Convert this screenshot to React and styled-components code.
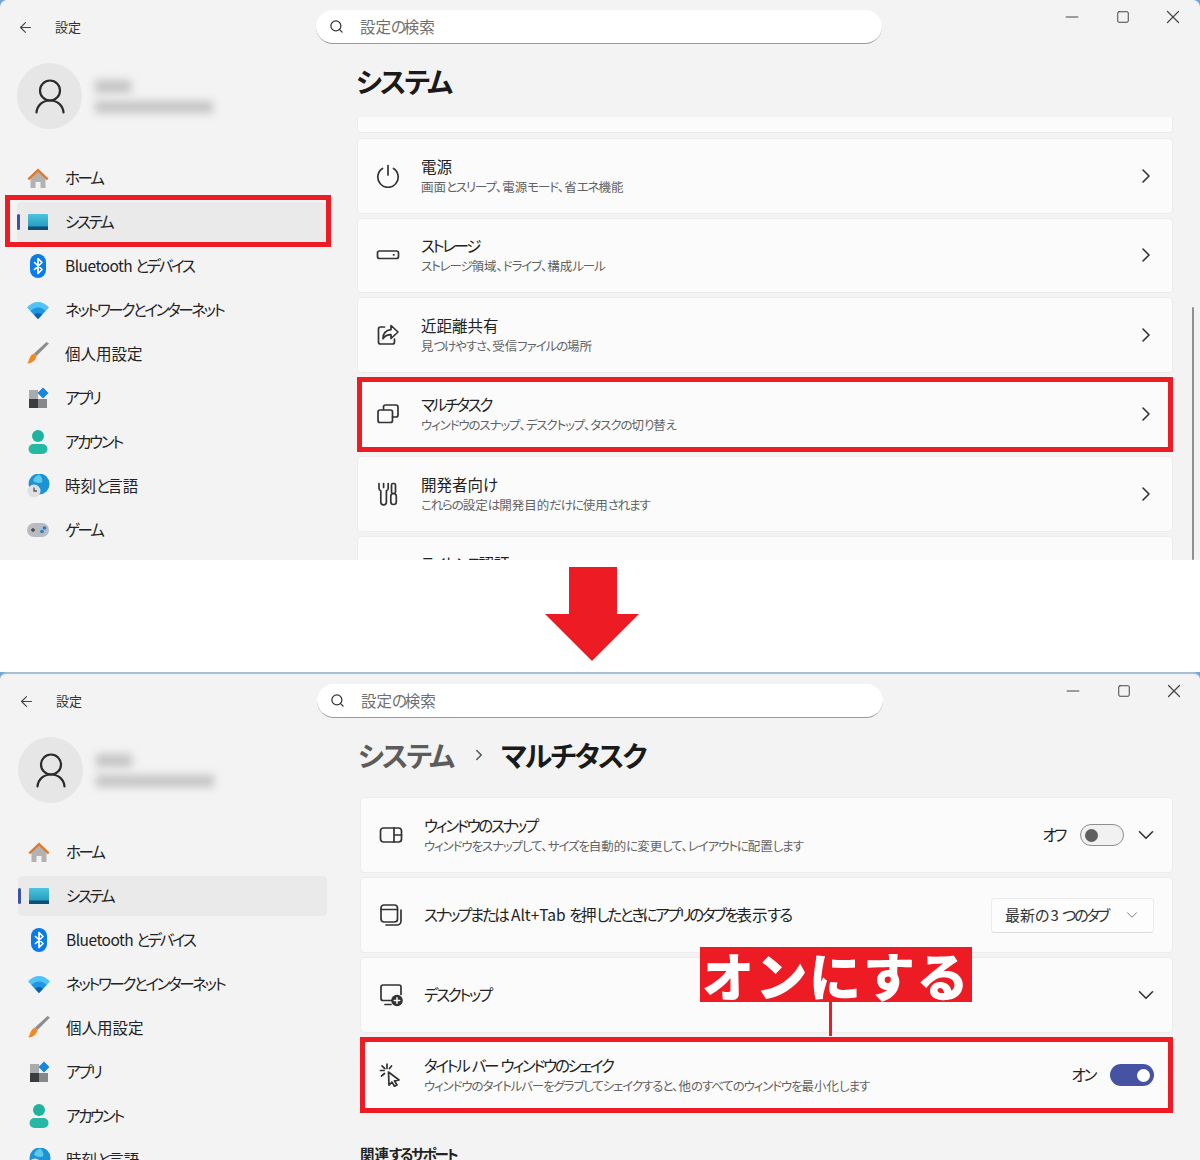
import React from 'react'
import styled, { createGlobalStyle } from 'styled-components'
import { ArrowLeft, ChevronDown, ChevronRight, Minus, Search, Square, X } from 'lucide-react'

const GlobalStyle = createGlobalStyle`
  html, body {
    margin: 0;
    background: #fff;
  }
  body {
    --kana: -0.15em;
    font-family: "Noto Sans CJK JP", "Noto Sans", sans-serif;
    font-feature-settings: "palt" 1;
    color: #1c1c1c;
  }
`

const RED = '#ed1c24'

// the window's UI font has narrower kana than Noto, so kana runs get tracked in
const Kana = styled.span`
  letter-spacing: var(--kana);
`

const T = ({ children }) =>
  children.split(/([\u3040-\u30ff]+)/).map((part, i) => (i % 2 ? <Kana key={i}>{part}</Kana> : part))

const Line = ({ children, size = 24 }) => (
  <svg width={size} height={size} viewBox='0 0 24 24' fill='none' stroke='#333' strokeWidth='1.7' strokeLinecap='round' strokeLinejoin='round'>
    {children}
  </svg>
)

const Color = ({ children }) => (
  <svg width='24' height='24' viewBox='0 0 24 24'>
    {children}
  </svg>
)

const HomeIcon = () => (
  <Color>
    <path d='M4.5 11.5 12 5l7.5 6.5V22h-5v-6h-5v6h-5z' fill='#b4b2b0' />
    <path d='M1.5 12.5 12 2.5l10.500 10-1.600 1.700L12 5.800 3.100 14.200z' fill='#e0782a' />
  </Color>
)

const SystemIcon = () => (
  <Color>
    <defs>
      <linearGradient id='sys' x1='0' y1='0' x2='0' y2='1'>
        <stop offset='0' stopColor='#4cc4de' />
        <stop offset='1' stopColor='#1d93bd' />
      </linearGradient>
    </defs>
    <rect x='2' y='4' width='20' height='16' rx='1' fill='url(#sys)' />
    <rect x='2' y='16.500' width='20' height='3.500' fill='#0f4f74' />
  </Color>
)

const BluetoothIcon = () => (
  <Color>
    <rect x='4' y='0' width='16' height='24' rx='8' fill='#0b7be8' />
    <path d='M8 8l8 7.500-4 4V4.500l4 4-8 7.500' fill='none' stroke='#fff' strokeWidth='1.700' strokeLinejoin='round' />
  </Color>
)

const WifiIcon = () => (
  <Color>
    <path d='M1 9.500C4 6 8 4 12 4s8 2 11 5.500L12 21z' fill='#4fc3f5' />
    <path d='M4.500 13C6.500 10.800 9 9.500 12 9.500s5.500 1.300 7.500 3.500L12 21z' fill='#1f96e0' />
    <path d='M8 16.800c1-1 2.500-1.800 4-1.800s3 .8 4 1.800L12 21z' fill='#0b5fb0' />
  </Color>
)

const BrushIcon = () => (
  <Color>
    <path d='M23 1.500 10.500 14 8 11.500 20.500 0z' fill='#8a8d90' />
    <path d='M8 11.500 10.500 14c-.5 4-4.500 7.500-9.500 7.500 2.500-2 1.500-7.500 7-10z' fill='#f08a24' />
  </Color>
)

const AppsIcon = () => (
  <Color>
    <rect x='3' y='4' width='9' height='9' fill='#a9abad' />
    <rect x='3' y='13' width='9' height='9' fill='#3a3c3f' />
    <rect x='12' y='13' width='9' height='9' fill='#85888b' />
    <path d='M17 1.500 22.500 7 17 12.500 11.500 7z' fill='#1787de' />
  </Color>
)

const AccountIcon = () => (
  <Color>
    <circle cx='12' cy='6' r='6' fill='#1fb39f' />
    <rect x='2.500' y='14' width='19' height='10' rx='5' fill='#25b8a4' />
  </Color>
)

const TimeIcon = () => (
  <Color>
    <circle cx='13' cy='10' r='10.500' fill='#1b93d6' />
    <path d='M13 .5c3 2 4 5 3 8-3 1-8 0-9-2 1-3 3-5 6-6z' fill='#5cc8ea' />
    <circle cx='8' cy='17' r='6.500' fill='#dfe0e2' />
    <path d='M8 13.500V17h3' fill='none' stroke='#555' strokeWidth='1.300' />
  </Color>
)

const GameIcon = () => (
  <Color>
    <rect x='1' y='5' width='22' height='14' rx='7' fill='#b9bbc0' />
    <path d='M5 12h4M7 10v4' stroke='#444' strokeWidth='1.300' />
    <circle cx='16' cy='13.500' r='1.800' fill='#1a7fd6' />
    <circle cx='18.500' cy='10' r='1.800' fill='#1a7fd6' />
  </Color>
)

const PersonIcon = () => (
  <svg width='30' height='35' viewBox='0 0 30 35' fill='none' stroke='#2b2b2b' strokeWidth='2.200' strokeLinecap='round'>
    <circle cx='15' cy='11.500' r='10' />
    <path d='M1.500 33.500C2 26.500 7.500 21.500 15 21.500s13 5 13.500 12' />
  </svg>
)

const PowerIcon = () => (
  <Line>
    <path d='M12 1.500v9.500' />
    <path d='M6.500 4.500a10.200 10.200 0 1 0 11 0' />
  </Line>
)

const StorageIcon = () => (
  <Line>
    <rect x='1.500' y='8' width='21' height='7.500' rx='2' />
    <path d='M17.500 11.800h.5' />
  </Line>
)

const ShareIcon = () => (
  <Line>
    <path d='M8.500 4H4.500a2 2 0 0 0-2 2v13a2 2 0 0 0 2 2h12a2 2 0 0 0 2-2v-3' />
    <path d='M15 2.500 22 9l-7 6.500v-3.800c-3.500 0-6 1-8 4 0-5 3-8.500 8-9z' />
  </Line>
)

const MultitaskIcon = () => (
  <Line>
    <path d='M7.500 7.500V5a2 2 0 0 1 2-2H20a2 2 0 0 1 2 2v8a2 2 0 0 1-2 2h-3.500' />
    <rect x='2' y='8' width='14.500' height='12.500' rx='2' />
  </Line>
)

const DevIcon = () => (
  <Line>
    <path d='M3 1.500v4.700a3 3 0 0 0 1.800 2.700V20a2.800 2.800 0 0 0 5.600 0V8.900a3 3 0 0 0 1.800-2.700V1.500M7.600 1.500v4' />
    <rect x='15.500' y='1.500' width='4' height='10' rx='1.500' />
    <rect x='14.800' y='11.500' width='5.500' height='11' rx='2.700' />
  </Line>
)

const SnapIcon = () => (
  <Line>
    <rect x='1.500' y='5' width='21' height='14' rx='3' />
    <path d='M15 5v14M15 12h7.500' />
  </Line>
)

const TabsIcon = () => (
  <Line>
    <rect x='2' y='2' width='16.500' height='17' rx='3' />
    <path d='M2 6.500h16.500M22 7v11a4 4 0 0 1-4 4H7' />
  </Line>
)

const DesktopIcon = () => (
  <svg width='24' height='24' viewBox='0 0 24 24' fill='none' strokeLinecap='round' strokeLinejoin='round'>
    <path d='M13 17.500H4a2 2 0 0 1-2-2V4a2 2 0 0 1 2-2h16a2 2 0 0 1 2 2v7.500M6 21.500h6' stroke='#333' strokeWidth='1.700' />
    <circle cx='18' cy='17.500' r='5.800' fill='#333' />
    <path d='M18 14.800v5.400M15.300 17.500h5.400' stroke='#fff' strokeWidth='1.500' />
  </svg>
)

const ShakeIcon = () => (
  <Line>
    <path d='M9.500 9 20 17l-4.500.8 2.500 4.200-2.500 1.300-2.500-4.200-3 3z' />
    <path d='M8 1v4.500M1.500 7.500H5M3 2.800l2.800 2.800M12.500 3l-2 2.500M2.500 13l3-2.500' />
  </Line>
)

const Wall = styled.div`
  background: #6ea6da;
`

const Window = styled.div`
  display: flex;
  flex-direction: column;
  position: relative;
  height: ${(p) => p.$height}px;
  box-sizing: border-box;
  overflow: hidden;
  background: #f3f3f3;
  border-radius: 7px 7px 0 0;
  padding: ${(p) => (p.$shifted ? '0 0 0 1px' : '0')};
  border-top: ${(p) => (p.$shifted ? '2px solid #a8c0d2' : 'none')};
`

const TitleBar = styled.div`
  display: grid;
  grid-template-columns: 316px 566px 1fr;
  flex: none;
  height: 54px;
`

const BackGroup = styled.div`
  display: flex;
  align-items: center;
  height: 54px;
  padding-left: 17px;
  font-size: 13px;
  color: #333;
  gap: 21px;
  svg {
    flex: none;
  }
  span {
    margin-bottom: 2px;
  }
`

const SearchBox = styled.div`
  display: flex;
  align-items: center;
  box-sizing: border-box;
  height: 34px;
  margin-top: 10px;
  padding-left: 13px;
  gap: 16px;
  background: #fff;
  border-radius: 17px;
  border-bottom: 1px solid #9a9a9a;
  font-size: 15.500px;
  color: #707070;
  span {
    margin-bottom: 2px;
  }
`

const Controls = styled.div`
  display: flex;
  align-items: center;
  height: 34px;
  padding-left: 165px;
`

const ControlButton = styled.div`
  display: flex;
  align-items: center;
  justify-content: center;
  flex: none;
  width: 50.500px;
  height: 34px;
  color: #444;
`

const Body = styled.div`
  display: grid;
  grid-template-columns: 356px 1fr;
  flex: 1;
  min-height: 0;
`

const Sidebar = styled.div`
  padding: 9px 30px 0 17px;
`

const Profile = styled.div`
  display: flex;
  align-items: center;
  gap: 13px;
`

const Avatar = styled.div`
  display: flex;
  align-items: center;
  justify-content: center;
  width: 65px;
  height: 66px;
  border-radius: 50%;
  background: #e6e6e6;
`

const Names = styled.div`
  display: flex;
  flex-direction: column;
  gap: 8px;
`

const Blurred = styled.div`
  width: ${(p) => p.$width}px;
  height: ${(p) => p.$height}px;
  background: #c4c4c4;
  filter: blur(4px);
`

const Nav = styled.div`
  display: flex;
  flex-direction: column;
  gap: 4px;
  margin-top: 29px;
  width: 309px;
`

const NavItem = styled.div`
  position: relative;
  display: flex;
  align-items: center;
  flex: none;
  height: 40px;
  padding-left: 9px;
  gap: 15px;
  border-radius: 4px;
  font-size: 15.500px;
  color: #222;
  background: ${(p) => (p.$active ? '#eaeaea' : 'transparent')};
  &::before {
    content: '';
    display: ${(p) => (p.$active ? 'block' : 'none')};
    position: absolute;
    left: 0;
    top: 12px;
    width: 3px;
    height: 16px;
    border-radius: 2px;
    background: #3f51a5;
  }
  &::after {
    content: '';
    display: ${(p) => (p.$marked ? 'block' : 'none')};
    position: absolute;
    inset: -7px -5px -5px -12px;
    border: 5px solid ${RED};
  }
`

const NavLabel = styled.span`
  margin-bottom: 2px;
  letter-spacing: ${(p) => p.$track || 0}px;
`

const Main = styled.div`
  display: flex;
  flex-direction: column;
  min-height: 0;
`

const Heading = styled.div`
  display: flex;
  align-items: center;
  flex: none;
  height: 40px;
  margin-top: 7px;
  padding-left: ${(p) => p.$inset}px;
  font-size: 28px;
  font-weight: 700;
  letter-spacing: -2px;
  color: #1a1a1a;
`

const Crumb = styled.span`
  color: #5c5c5c;
`

const CrumbArrow = styled.span`
  display: flex;
  margin: 0 13px 0 17px;
  color: #555;
`

const List = styled.div`
  display: flex;
  flex-direction: column;
  flex: 1;
  min-height: 0;
  gap: ${(p) => p.$gap}px;
  overflow: hidden;
  margin-top: ${(p) => p.$top}px;
  padding: 0 27px 0 ${(p) => p.$inset}px;
`

const Card = styled.div`
  position: relative;
  display: flex;
  align-items: center;
  flex: none;
  box-sizing: border-box;
  height: ${(p) => p.$height}px;
  padding-right: 18px;
  background: #fbfbfb;
  border: 1px solid #ececec;
  border-radius: 4px;
  &::after {
    content: '';
    display: ${(p) => (p.$marked ? 'block' : 'none')};
    position: absolute;
    inset: -1px;
    border: 5px solid ${RED};
    pointer-events: none;
  }
`

const Stub = styled.div`
  flex: none;
  box-sizing: border-box;
  height: 16px;
  margin-bottom: 1px;
  background: #fbfbfb;
  border: 1px solid #ececec;
  border-top: none;
  border-radius: 0 0 4px 4px;
`

const CardIcon = styled.div`
  display: flex;
  flex: none;
  box-sizing: border-box;
  width: 63px;
  padding-left: 18px;
`

const CardText = styled.div`
  flex: 1;
  min-width: 0;
`

const CardTitle = styled.div`
  font-size: 15.500px;
  line-height: 20px;
  margin-bottom: 2px;
  color: #222;
`

const CardSub = styled.div`
  --kana: -0.09em;
  font-size: 12.500px;
  line-height: 18px;
  color: #636363;
`

const Chevron = styled.div`
  display: flex;
  justify-content: center;
  flex: none;
  width: 16px;
  margin-left: ${(p) => p.$gap || 0}px;
  color: #333;
  svg {
    flex: none;
  }
`

const StateLabel = styled.span`
  flex: none;
  margin: 0 15px 2px 0;
  font-size: 15.500px;
  color: #222;
`

const Toggle = styled.div`
  display: flex;
  align-items: center;
  justify-content: ${(p) => (p.$on ? 'flex-end' : 'flex-start')};
  flex: none;
  box-sizing: border-box;
  width: 44px;
  height: 22px;
  padding: 0 4px;
  border-radius: 11px;
  background: ${(p) => (p.$on ? '#4653a3' : '#f1f1f1')};
  border: ${(p) => (p.$on ? 'none' : '1.500px solid #8e8e8e')};
  &::after {
    content: '';
    width: 13px;
    height: 13px;
    border-radius: 50%;
    background: ${(p) => (p.$on ? '#fff' : '#5f5f5f')};
  }
`

const Dropdown = styled.div`
  display: flex;
  align-items: center;
  flex: none;
  box-sizing: border-box;
  width: 163px;
  height: 35px;
  padding: 0 12px 0 13px;
  justify-content: space-between;
  background: #fdfdfd;
  border: 1px solid #ececec;
  border-bottom-color: #dcdcdc;
  border-radius: 4px;
  font-size: 15px;
  color: #333;
  span {
    margin-bottom: 2px;
  }
  svg {
    color: #777;
  }
`

const Section = styled.div`
  flex: none;
  margin-top: 27px;
  font-size: 14.500px;
  line-height: 20px;
  font-weight: 700;
  color: #222;
`

const Callout = styled.div`
  position: absolute;
  left: 339px;
  bottom: calc(100% + 2px);
  display: flex;
  flex-direction: column;
  align-items: flex-start;
  z-index: 2;
`

const CalloutLabel = styled.div`
  display: flex;
  align-items: center;
  justify-content: center;
  width: 272px;
  height: 55px;
  background: ${RED};
  color: #fff;
  font-size: 52px;
  font-weight: 900;
  font-feature-settings: normal;
  letter-spacing: 1.500px;
  white-space: nowrap;
`

const CalloutStem = styled.div`
  width: 3px;
  height: 34px;
  margin-left: 129px;
  background: ${RED};
`

const ScrollThumb = styled.div`
  position: absolute;
  right: 6px;
  top: 307px;
  bottom: 0;
  width: 2px;
  background: #8f8f8f;
  border-radius: 1px;
`

const ArrowBand = styled.div`
  display: flex;
  justify-content: center;
  height: 112px;
  background: #fff;
  padding: 7px 16px 0 0;
  box-sizing: border-box;
`

const navItems = [
  { label: 'ホーム', icon: <HomeIcon /> },
  { label: 'システム', icon: <SystemIcon />, active: true },
  { label: 'Bluetooth とデバイス', icon: <BluetoothIcon />, track: -0.5 },
  { label: 'ネットワークとインターネット', icon: <WifiIcon /> },
  { label: '個人用設定', icon: <BrushIcon /> },
  { label: 'アプリ', icon: <AppsIcon /> },
  { label: 'アカウント', icon: <AccountIcon /> },
  { label: '時刻と言語', icon: <TimeIcon /> },
  { label: 'ゲーム', icon: <GameIcon /> },
]

const systemRows = [
  { title: '電源', sub: '画面とスリープ、電源モード、省エネ機能', icon: <PowerIcon /> },
  { title: 'ストレージ', sub: 'ストレージ領域、ドライブ、構成ルール', icon: <StorageIcon /> },
  { title: '近距離共有', sub: '見つけやすさ、受信ファイルの場所', icon: <ShareIcon /> },
  { title: 'マルチタスク', sub: 'ウィンドウのスナップ、デスクトップ、タスクの切り替え', icon: <MultitaskIcon />, marked: true },
  { title: '開発者向け', sub: 'これらの設定は開発目的だけに使用されます', icon: <DevIcon /> },
  { title: 'ライセンス認証', sub: 'アクティブ化の状態、サブスクリプション', icon: null },
]

const Shell = ({ height, shifted, marked, scroll, heading, children }) => (
  <Wall>
    <Window $height={height} $shifted={shifted}>
      <TitleBar>
        <BackGroup>
          <ArrowLeft size={17} strokeWidth={1.5} color='#444' />
          <span>設定</span>
        </BackGroup>
        <SearchBox>
          <Search size={15} strokeWidth={2} color='#333' />
          <span><T>設定の検索</T></span>
        </SearchBox>
        <Controls>
          <ControlButton><Minus size={20} strokeWidth={1.4} /></ControlButton>
          <ControlButton><Square size={14} strokeWidth={1.7} /></ControlButton>
          <ControlButton><X size={22} strokeWidth={1.3} /></ControlButton>
        </Controls>
      </TitleBar>
      <Body>
        <Sidebar>
          <Profile>
            <Avatar><PersonIcon /></Avatar>
            <Names>
              <Blurred $width={36} $height={13} />
              <Blurred $width={118} $height={12} />
            </Names>
          </Profile>
          <Nav>
            {navItems.map((item) => (
              <NavItem key={item.label} $active={item.active} $marked={item.active && marked}>
                {item.icon}
                <NavLabel $track={item.track}><T>{item.label}</T></NavLabel>
              </NavItem>
            ))}
          </Nav>
        </Sidebar>
        <Main>
          {heading}
          {children}
        </Main>
      </Body>
      {scroll && <ScrollThumb />}
    </Window>
  </Wall>
)

const App = () => (
  <>
    <GlobalStyle />
    <Shell
      height={560}
      marked
      scroll
      heading={<Heading $inset={0}>システム</Heading>}
    >
      <List $top={16} $gap={4} $inset={1}>
        <Stub />
        {systemRows.map((row) => (
          <Card key={row.title} $height={75.5} $marked={row.marked}>
            <CardIcon>{row.icon}</CardIcon>
            <CardText>
              <CardTitle><T>{row.title}</T></CardTitle>
              <CardSub><T>{row.sub}</T></CardSub>
            </CardText>
            <Chevron><ChevronRight size={24} strokeWidth={1.6} /></Chevron>
          </Card>
        ))}
      </List>
    </Shell>

    <ArrowBand>
      <svg width='94' height='94' viewBox='0 0 94 94'>
        <path d='M24 0h48v47h22L47 94 0 47h24z' fill={RED} />
      </svg>
    </ArrowBand>

    <Shell
      height={488}
      shifted
      heading={
        <Heading $inset={1}>
          <Crumb>システム</Crumb>
          <CrumbArrow><ChevronRight size={18} strokeWidth={2} /></CrumbArrow>
          <span>マルチタスク</span>
        </Heading>
      }
    >
      <List $top={22} $gap={4} $inset={3}>
        <Card $height={76}>
          <CardIcon><SnapIcon /></CardIcon>
          <CardText>
            <CardTitle><T>ウィンドウのスナップ</T></CardTitle>
            <CardSub><T>ウィンドウをスナップして、サイズを自動的に変更して、レイアウトに配置します</T></CardSub>
          </CardText>
          <StateLabel><T>オフ</T></StateLabel>
          <Toggle />
          <Chevron $gap={14}><ChevronDown size={26} strokeWidth={1.5} /></Chevron>
        </Card>
        <Card $height={76}>
          <CardIcon><TabsIcon /></CardIcon>
          <CardText>
            <CardTitle><T>スナップまたは Alt+Tab を押したときにアプリのタブを表示する</T></CardTitle>
          </CardText>
          <Dropdown>
            <span><T>最新の 3 つのタブ</T></span>
            <ChevronDown size={18} strokeWidth={1.3} />
          </Dropdown>
        </Card>
        <Card $height={76}>
          <CardIcon><DesktopIcon /></CardIcon>
          <CardText>
            <CardTitle><T>デスクトップ</T></CardTitle>
          </CardText>
          <Chevron><ChevronDown size={26} strokeWidth={1.5} /></Chevron>
        </Card>
        <Card $height={76} $marked>
          <Callout>
            <CalloutLabel>オンにする</CalloutLabel>
            <CalloutStem />
          </Callout>
          <CardIcon><ShakeIcon /></CardIcon>
          <CardText>
            <CardTitle><T>タイトル バー ウィンドウのシェイク</T></CardTitle>
            <CardSub><T>ウィンドウのタイトルバーをグラブしてシェイクすると、他のすべてのウィンドウを最小化します</T></CardSub>
          </CardText>
          <StateLabel><T>オン</T></StateLabel>
          <Toggle $on />
        </Card>
        <Section><T>関連するサポート</T></Section>
      </List>
    </Shell>
  </>
)

export default App
